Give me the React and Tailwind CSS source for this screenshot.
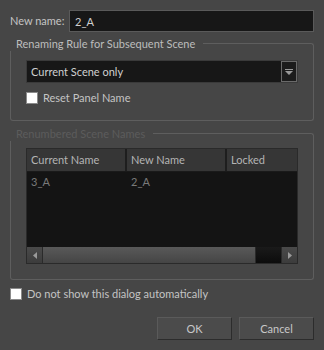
import { useState } from 'react'

function Check({ checked, onChange, label }) {
  return (
    <label className="flex items-center gap-[5px] h-[14px] cursor-default select-none whitespace-nowrap">
      <span
        onClick={onChange}
        className="w-[12px] h-[12px] bg-white border border-[#8a8a8a] flex items-center justify-center text-[9px] text-black leading-none"
      >
        {checked ? '✓' : ''}
      </span>
      <span>{label}</span>
    </label>
  )
}

function GroupBox({ title, disabled, className, children }) {
  return (
    <div className={className}>
      <div className="flex h-[14px]">
        <span className={`px-[6px] leading-[14px] whitespace-nowrap ${disabled ? 'text-[#5c5c5c]' : 'text-[#bdbdbd]'}`}>
          {title}
        </span>
        <div className="flex-1 mt-[6px] ml-[2px] border-t border-r border-[#5e5e5e] rounded-tr-[3px]" />
      </div>
      <div className="border-l border-r border-b border-[#5e5e5e] rounded-b-[3px]">{children}</div>
    </div>
  )
}

export default function App() {
  const [name, setName] = useState('2_A')
  const [resetPanel, setResetPanel] = useState(false)
  const [noShow, setNoShow] = useState(false)

  const rows = [{ current: '3_A', next: '2_A', locked: '' }]

  return (
    <div
      className="w-[324px] h-[350px] bg-[#464646] text-[#c4c4c4] text-[11px] leading-[14px] px-[10px] pt-[10px] flex flex-col"
      style={{ fontFamily: 'Lato, "Noto Sans", sans-serif' }}
    >
      {/* name field */}
      <div className="flex items-center h-[22px]">
        <span className="w-[59px] shrink-0 whitespace-nowrap">New name:</span>
        <input
          value={name}
          onChange={(e) => setName(e.target.value)}
          className="flex-1 h-[22px] bg-[#171717] border border-[#5a5a5a] px-[5px] text-[#d0d0d0] outline-none"
        />
      </div>

      {/* renaming rule */}
      <GroupBox title="Renaming Rule for Subsequent Scene" className="mt-[5px]">
        <div className="px-[15px] pt-[9px] pb-[15px]">
          <div className="flex h-[23px] bg-[#171717] border border-[#3a3a3a]">
            <span className="flex-1 px-[4px] leading-[21px] text-[#d0d0d0]">Current Scene only</span>
            <span className="w-[16px] border border-[#6a6a6a] bg-[#1c1c1c] flex items-center justify-center">
              <svg width="8" height="6" viewBox="0 0 8 6">
                <rect x="0" y="0" width="8" height="1" fill="#9a9a9a" />
                <path d="M0 2h8L4 6z" fill="#9a9a9a" />
              </svg>
            </span>
          </div>
          <div className="mt-[8px]">
            <Check checked={resetPanel} onChange={() => setResetPanel(!resetPanel)} label="Reset Panel Name" />
          </div>
        </div>
      </GroupBox>

      {/* renumbered names */}
      <GroupBox title="Renumbered Scene Names" disabled className="mt-[6px]">
        <div className="px-[15px] pt-[7px] pb-[15px]">
          <div className="border border-[#2a2a2a] bg-[#141414] h-[116px] flex flex-col">
            <div className="flex h-[23px] bg-[#363636] border-b border-[#1a1a1a] text-[#b4b4b4]">
              <div className="w-[100px] px-[4px] leading-[22px] border-r-2 border-[#1e1e1e]">Current Name</div>
              <div className="w-[100px] px-[4px] leading-[22px] border-r-2 border-[#1e1e1e]">New Name</div>
              <div className="flex-1 px-[4px] leading-[22px]">Locked</div>
            </div>
            <div className="flex-1 text-[#7a7a7a]">
              {rows.map((r) => (
                <div key={r.current} className="flex h-[20px] leading-[20px]">
                  <div className="w-[100px] px-[4px]">{r.current}</div>
                  <div className="w-[100px] px-[4px]">{r.next}</div>
                  <div className="flex-1 px-[4px]">{r.locked}</div>
                </div>
              ))}
            </div>
            {/* scrollbar */}
            <div className="flex h-[16px] bg-[#2e2e2e]">
              <span className="w-[16px] bg-gradient-to-b from-[#4a4a4a] to-[#3c3c3c] border-r border-[#2a2a2a] flex items-center justify-center">
                <svg width="4" height="7" viewBox="0 0 4 7"><path d="M4 0v7L0 3.5z" fill="#9a9a9a" /></svg>
              </span>
              <span className="w-[213px] bg-gradient-to-b from-[#595959] to-[#454545] border-r border-[#2a2a2a]" />
              <span className="flex-1 bg-gradient-to-b from-[#1a1a1a] to-[#0c0c0c]" />
              <span className="w-[16px] bg-gradient-to-b from-[#4a4a4a] to-[#3c3c3c] border-l border-[#2a2a2a] flex items-center justify-center">
                <svg width="4" height="7" viewBox="0 0 4 7"><path d="M0 0v7L4 3.5z" fill="#9a9a9a" /></svg>
              </span>
            </div>
          </div>
        </div>
      </GroupBox>

      <div className="mt-[7px]">
        <Check checked={noShow} onChange={() => setNoShow(!noShow)} label="Do not show this dialog automatically" />
      </div>

      <div className="flex justify-end gap-[7px] mt-[16px]">
        <button className="w-[75px] h-[23px] bg-[#4b4b4b] border border-[#2c2c2c] border-t-[#5a5a5a] border-l-[#5a5a5a] text-[#c8c8c8]">OK</button>
        <button className="w-[75px] h-[23px] bg-[#4b4b4b] border border-[#2c2c2c] border-t-[#5a5a5a] border-l-[#5a5a5a] text-[#c8c8c8]">Cancel</button>
      </div>
    </div>
  )
}
